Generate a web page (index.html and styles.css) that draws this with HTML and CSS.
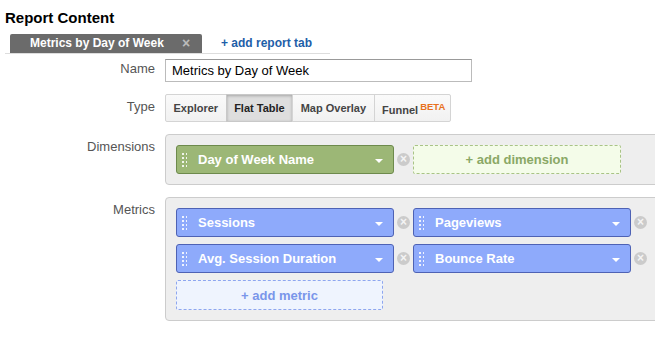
FILE: index.html
```html
<!DOCTYPE html>
<html>
<head lang="en">
    <meta charset="UTF-8">
    <link rel="stylesheet" href="styles.css">
    <title>Report Content</title>
</head>
<body>
<div id="editor">
    <h1>Report Content</h1>
    <div class="tabs">
        <span class="tab">Metrics by Day of Week <span class="tabClose">&times;</span></span>
        <a class="addTab">+ add report tab</a>
    </div>

    <div class="row">
        <label class="label">Name</label>
        <input class="nameInput" type="text" value="Metrics by Day of Week">
    </div>

    <div class="row rowType">
        <label class="label">Type</label>
        <div class="typeGroup">
            <button class="typeBtn">Explorer</button>
            <button class="typeBtn active">Flat Table</button>
            <button class="typeBtn">Map Overlay</button>
            <button class="typeBtn">Funnel<sup class="beta">BETA</sup></button>
        </div>
    </div>

    <div class="row rowPanel">
        <label class="label labelPanel">Dimensions</label>
        <div class="panel">
            <div class="chipRow">
                <div class="chip dim"><span class="grip"></span><span class="chipText">Day of Week Name</span><span class="caret"></span></div>
                <span class="remove">&times;</span>
                <div class="addBox addDim">+ add dimension</div>
            </div>
        </div>
    </div>

    <div class="row rowPanel">
        <label class="label labelPanel">Metrics</label>
        <div class="panel">
            <div class="chipRow">
                <div class="chip met"><span class="grip"></span><span class="chipText">Sessions</span><span class="caret"></span></div>
                <span class="remove">&times;</span>
                <div class="chip met"><span class="grip"></span><span class="chipText">Pageviews</span><span class="caret"></span></div>
                <span class="remove">&times;</span>
            </div>
            <div class="chipRow">
                <div class="chip met"><span class="grip"></span><span class="chipText">Avg. Session Duration</span><span class="caret"></span></div>
                <span class="remove">&times;</span>
                <div class="chip met"><span class="grip"></span><span class="chipText">Bounce Rate</span><span class="caret"></span></div>
                <span class="remove">&times;</span>
            </div>
            <div class="chipRow">
                <div class="addBox addMet">+ add metric</div>
            </div>
        </div>
    </div>
</div>
</body>
</html>
```

FILE: styles.css
```css
body {
    margin: 0;
    font-family: "Liberation Sans", Arial, Helvetica, sans-serif;
    background: #fff;
    overflow: hidden;
}
#editor {
    padding: 9px 0 0 5px;
    width: 650px;
    overflow: hidden;
}
h1 {
    font-size: 15px;
    line-height: 18px;
    margin: 0;
    color: #000;
}
.tabs {
    display: flex;
    align-items: flex-end;
    margin-top: 7px;
    padding-left: 5px;
    border-bottom: 1px solid #ddd;
    width: 320px;
    height: 19px;
}
.tab {
    background: #6b6b6b;
    color: #fff;
    font-size: 12px;
    font-weight: bold;
    height: 19px;
    line-height: 19px;
    width: 172px;
    padding-left: 20px;
    border-radius: 2px 2px 0 0;
    position: relative;
}
.tabClose {
    position: absolute;
    left: 172px;
    top: 0;
    color: #bbb;
    font-size: 14px;
}
.addTab {
    color: #1d5ea8;
    font-size: 12px;
    font-weight: bold;
    line-height: 19px;
    margin-left: 19px;
    cursor: pointer;
}
.row {
    display: flex;
    align-items: center;
}
.label {
    flex-shrink: 0;
    width: 150px;
    text-align: right;
    color: #555;
    font-size: 13px;
    padding-right: 10px;
}
.nameInput {
    margin: 5px 0 0 0;
    width: 307px;
    height: 23px;
    box-sizing: border-box;
    border: 1px solid #bbb;
    border-top-color: #999;
    font-family: inherit;
    font-size: 13px;
    padding: 0 6px;
    color: #000;
}
.rowType {
    margin-top: 12px;
    align-items: flex-start;
}
.rowType .label {
    padding-top: 5px;
}
.typeGroup {
    display: flex;
    border-radius: 2px;
}
.typeBtn {
    font-family: inherit;
    font-size: 11px;
    font-weight: bold;
    color: #444;
    height: 28px;
    padding: 0 7.5px;
    margin: 0 -1px 0 0;
    background: linear-gradient(#fafafa, #f1f1f1);
    border: 1px solid #d4d4d4;
    cursor: pointer;
}
.typeBtn:first-child {
    border-radius: 2px 0 0 2px;
}
.typeBtn:last-child {
    border-radius: 0 2px 2px 0;
    padding-right: 5px;
}
.typeBtn.active {
    background: #dedede;
    color: #222;
    box-shadow: inset 0 1px 3px rgba(0,0,0,0.25);
    border-color: #c8c8c8;
}
.beta {
    color: #e8711c;
    font-size: 9.5px;
    margin-left: 2px;
    vertical-align: 4px;
}
.rowPanel {
    align-items: flex-start;
    margin-top: 12px;
}
.labelPanel {
    padding-top: 5px;
}
.panel {
    flex-shrink: 0;
    background: #eee;
    border: 1px solid #ccc;
    border-radius: 4px;
    padding: 10px;
    width: 500px;
    display: flex;
    flex-direction: column;
    gap: 7px;
}
.chipRow {
    display: flex;
    align-items: center;
}
.chip {
    width: 218px;
    height: 29px;
    box-sizing: border-box;
    border-radius: 3px;
    display: flex;
    align-items: center;
    color: #fff;
    font-size: 13px;
    font-weight: bold;
}
.chip.dim {
    background: #9cb776;
    border: 1px solid #6d8a4c;
}
.chip.met {
    background: #8eaafb;
    border: 1px solid #4e62b4;
}
.grip {
    width: 5px;
    height: 15px;
    margin: 0 11px 0 5px;
    background-image: radial-gradient(circle, rgba(255,255,255,0.85) 0.9px, transparent 1.1px);
    background-size: 4px 4px;
    background-position: -1px 0;
}
.chipText {
    flex: 1;
}
.caret {
    width: 0;
    height: 0;
    border-left: 4px solid transparent;
    border-right: 4px solid transparent;
    border-top: 4px solid #fff;
    margin-right: 10px;
    margin-top: 2px;
}
.remove {
    width: 13px;
    height: 13px;
    border-radius: 50%;
    background: #cbcbcb;
    color: #f4f4f4;
    font-size: 12px;
    font-weight: bold;
    line-height: 13px;
    text-align: center;
    margin: 0 3px 0 3px;
}
.addBox {
    height: 29px;
    box-sizing: border-box;
    border-radius: 2px;
    display: flex;
    align-items: center;
    justify-content: center;
    font-size: 13px;
    font-weight: bold;
}
.addDim {
    width: 208px;
    background: #f4fce9;
    border: 1px dashed #a9c386;
    color: #8aa866;
}
.addMet {
    width: 207px;
    height: 30px;
    background: #eff4fe;
    border: 1px dashed #8ea6ef;
    color: #7a96ea;
}
```
